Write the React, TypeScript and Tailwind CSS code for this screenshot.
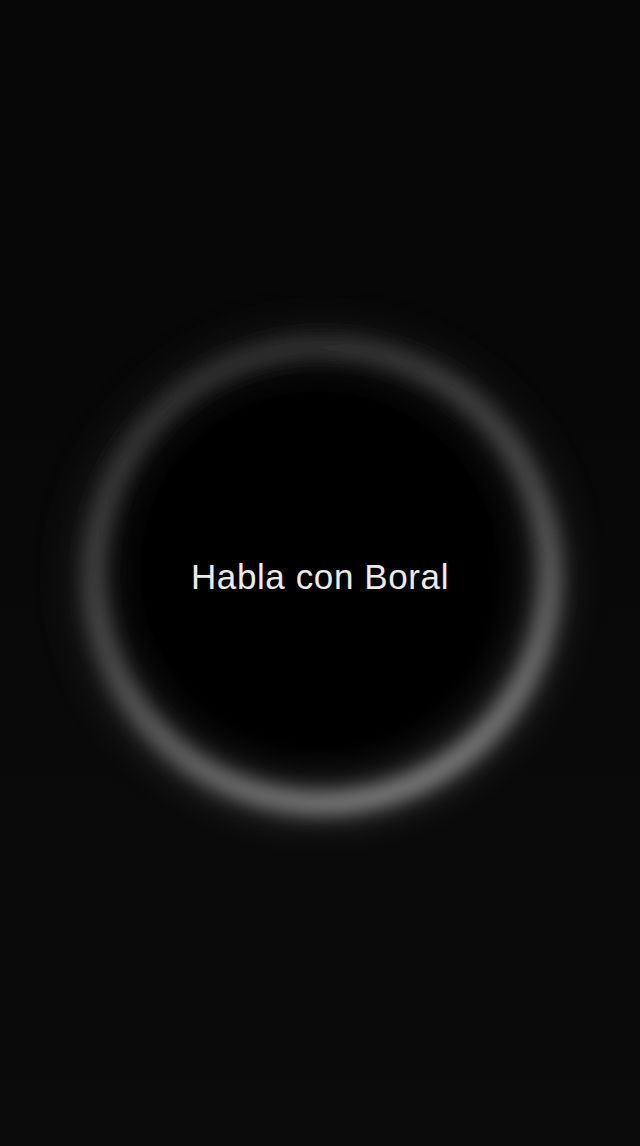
// Voice assistant idle screen — glowing ring with prompt

function GlowRing() {
  return (
    <svg width="600" height="600" viewBox="0 0 600 600" className="block">
      <defs>
        <linearGradient id="ringStroke" x1="0.25" y1="0" x2="0.65" y2="1">
          <stop offset="0" stopColor="#2e2e2e" />
          <stop offset="0.5" stopColor="#4a4a4a" />
          <stop offset="1" stopColor="#7e7e7e" />
        </linearGradient>
        <radialGradient id="innerShade" cx="0.5" cy="0.5" r="0.5">
          <stop offset="0" stopColor="#000000" />
          <stop offset="0.75" stopColor="#000000" />
          <stop offset="1" stopColor="#000000" stopOpacity="0" />
        </radialGradient>
        <filter id="soft" x="-20%" y="-20%" width="140%" height="140%">
          <feGaussianBlur stdDeviation="9" />
        </filter>
        <filter id="wide" x="-20%" y="-20%" width="140%" height="140%">
          <feGaussianBlur stdDeviation="18" />
        </filter>
      </defs>
      <circle cx="300" cy="300" r="226" fill="url(#innerShade)" />
      <circle
        cx="300"
        cy="300"
        r="230"
        fill="none"
        stroke="url(#ringStroke)"
        strokeWidth="40"
        opacity="0.3"
        filter="url(#wide)"
      />
      <circle
        cx="302"
        cy="302"
        r="228"
        fill="none"
        stroke="url(#ringStroke)"
        strokeWidth="22"
        filter="url(#soft)"
      />
    </svg>
  );
}

export default function App() {
  return (
    <div className="flex h-[1146px] w-full items-center justify-center overflow-hidden bg-gradient-to-b from-[#060606] to-[#0b0b0b]">
      <div className="relative flex items-center justify-center">
        <GlowRing />
        <p className="absolute inset-0 flex items-center justify-center pt-[8px] font-['Liberation_Sans',Arial,sans-serif] text-[35px] tracking-[0.6px] text-[#ebebeb]">
          Habla con Boral
        </p>
      </div>
    </div>
  );
}
